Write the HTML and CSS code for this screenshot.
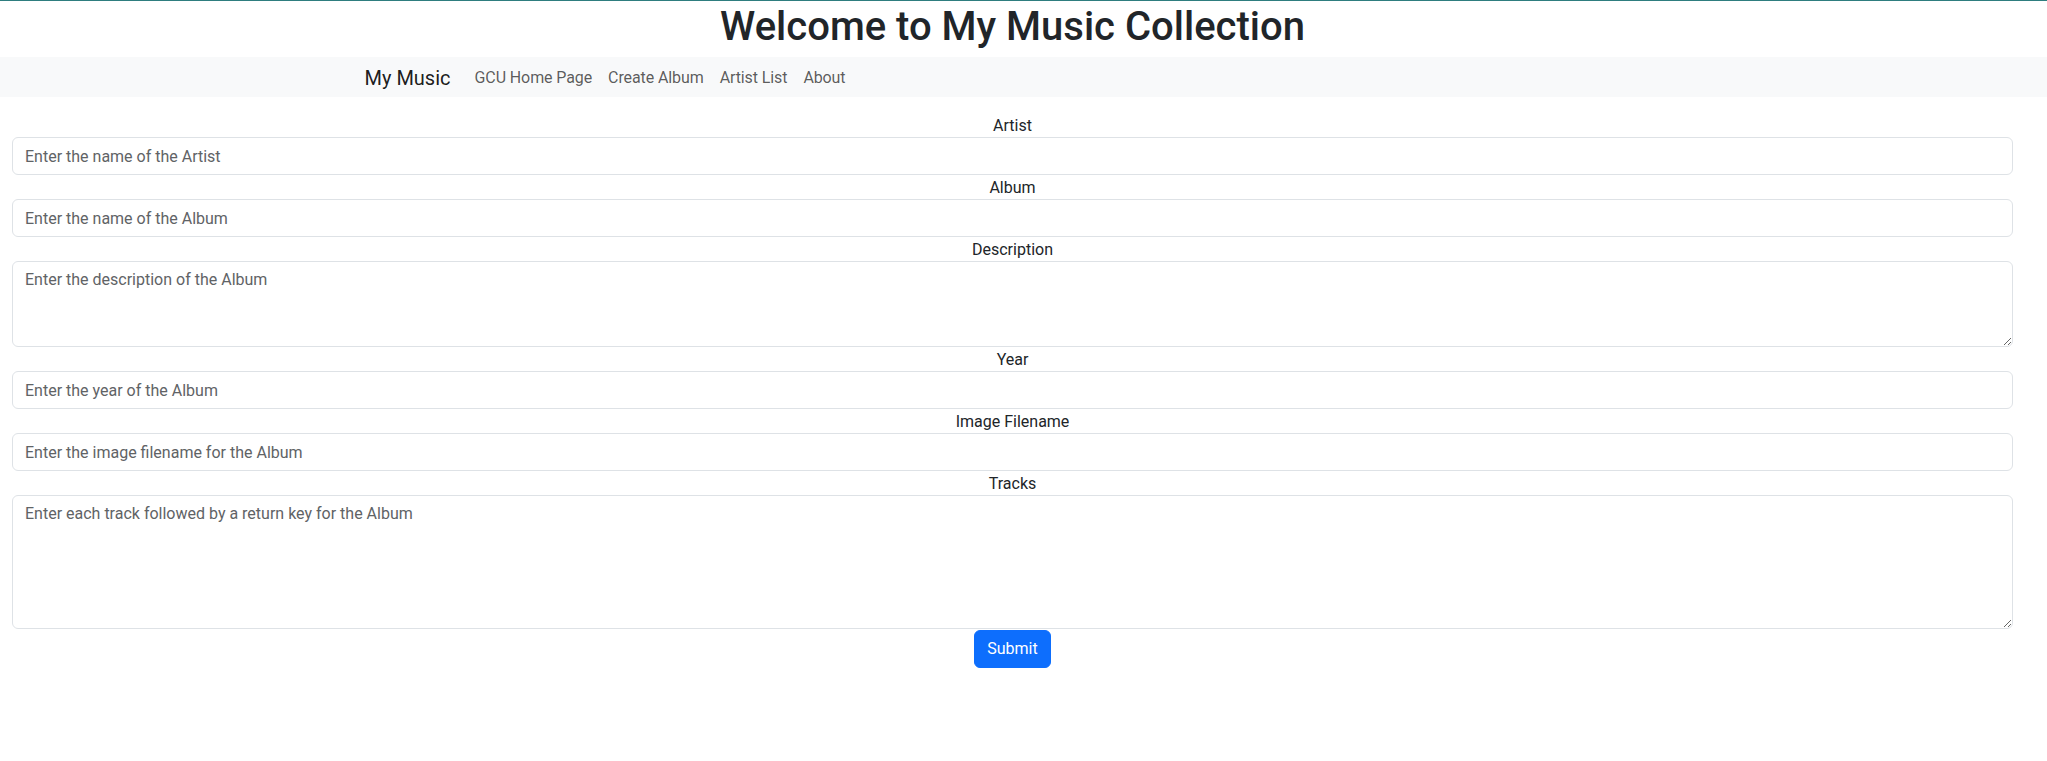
FILE: index.html
```html
<!DOCTYPE html>
<html lang="en">
<head>
<meta charset="utf-8">
<title>My Music</title>
<link rel="stylesheet" href="styles.css">
</head>
<body>
<header class="frame header">
  <h1 class="title">Welcome to My Music Collection</h1>
</header>
<nav class="navbar">
  <div class="frame">
    <div class="container">
      <a class="brand" href="#">My Music</a>
      <ul class="nav-list">
        <li><a class="nav-link" href="#">GCU Home Page</a></li>
        <li><a class="nav-link" href="#">Create Album</a></li>
        <li><a class="nav-link" href="#">Artist List</a></li>
        <li><a class="nav-link" href="#">About</a></li>
      </ul>
    </div>
  </div>
</nav>
<main class="frame main">
  <form class="album-form">
    <label class="form-label" for="artist">Artist</label>
    <input class="form-control" id="artist" type="text" placeholder="Enter the name of the Artist">
    <label class="form-label" for="album">Album</label>
    <input class="form-control" id="album" type="text" placeholder="Enter the name of the Album">
    <label class="form-label" for="description">Description</label>
    <textarea class="form-control area-3" id="description" rows="3" placeholder="Enter the description of the Album"></textarea>
    <label class="form-label" for="year">Year</label>
    <input class="form-control" id="year" type="text" placeholder="Enter the year of the Album">
    <label class="form-label" for="image">Image Filename</label>
    <input class="form-control" id="image" type="text" placeholder="Enter the image filename for the Album">
    <label class="form-label" for="tracks">Tracks</label>
    <textarea class="form-control area-5" id="tracks" rows="5" placeholder="Enter each track followed by a return key for the Album"></textarea>
    <div class="actions">
      <button class="btn-primary" type="submit">Submit</button>
    </div>
  </form>
</main>
</body>
</html>
```
FILE: styles.css
```css
* { box-sizing: border-box; }

html, body {
  margin: 0;
  padding: 0;
}

body {
  font-family: Roboto, "Liberation Sans", Arial, sans-serif;
  font-size: 16px;
  line-height: 24px;
  color: #212529;
  background: #ffffff;
  border-top: 1px solid #2e7d7f;
}

.frame {
  width: 2025px;
}

.header {
  text-align: center;
}

.title {
  margin: 0 0 8px 0;
  padding-top: 3px;
  font-size: 40px;
  line-height: 45px;
  font-weight: 500;
  color: #212529;
}

.navbar {
  background: #f8f9fa;
  height: 40px;
}

.container {
  max-width: 1320px;
  margin: 0 auto;
  padding: 1px 12px 0 12px;
  height: 40px;
  display: flex;
  align-items: center;
}

.brand {
  font-size: 20px;
  line-height: 30px;
  color: rgba(0, 0, 0, 0.9);
  text-decoration: none;
  margin-right: 16px;
}

.nav-list {
  list-style: none;
  margin: 0;
  padding: 0;
  display: flex;
}

.nav-link {
  display: block;
  padding: 8px 8px;
  color: rgba(0, 0, 0, 0.65);
  text-decoration: none;
  font-size: 16px;
  line-height: 24px;
  letter-spacing: -0.1px;
}

.main {
  padding: 16px 12px 0 12px;
}

.album-form {
  display: flex;
  flex-direction: column;
}

.form-label {
  display: block;
  text-align: center;
  font-size: 16px;
  line-height: 23px;
  padding-top: 1px;
  color: #212529;
}

.form-control {
  display: block;
  width: 100%;
  height: 38px;
  padding: 6px 12px;
  font-family: inherit;
  font-size: 16px;
  line-height: 24px;
  color: #212529;
  background: #ffffff;
  border: 1px solid #dee2e6;
  border-radius: 6px;
  margin: 0;
  outline: none;
}

.form-control::placeholder {
  color: #5f6366;
  opacity: 1;
}

textarea.form-control {
  resize: vertical;
}

.area-3 { height: 86px; }
.area-5 { height: 134px; }

.actions {
  display: flex;
  justify-content: center;
  padding-top: 1px;
}

.btn-primary {
  font-family: inherit;
  font-size: 16px;
  line-height: 24px;
  padding: 6px 12px;
  color: #ffffff;
  background: #0d6efd;
  border: 1px solid #0d6efd;
  border-radius: 6px;
  cursor: pointer;
}
```
